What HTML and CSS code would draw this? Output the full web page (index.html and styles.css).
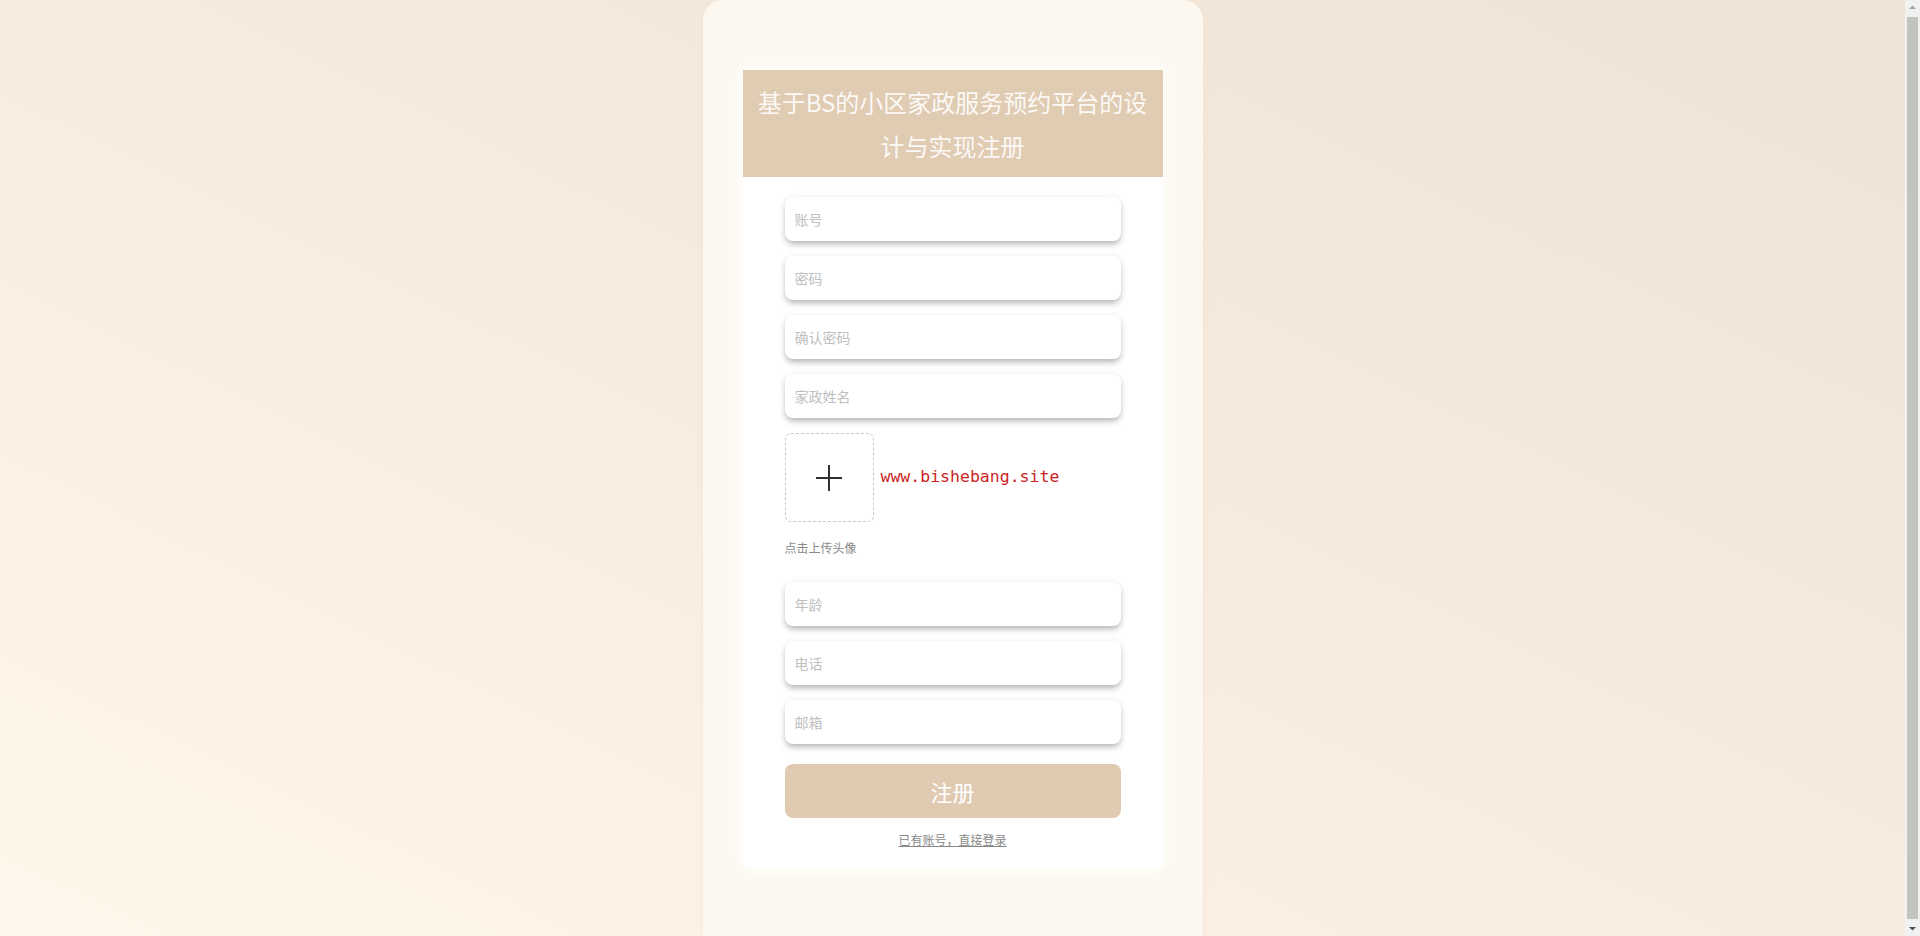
FILE: index.html
```html
<!DOCTYPE html>
<html lang="zh-CN">
<head>
<meta charset="utf-8">
<title>注册</title>
<link rel="stylesheet" href="styles.css">
</head>
<body>
<main class="viewport">
  <div class="shell">
    <div class="card">
      <div class="card-title">基于BS的小区家政服务预约平台的设计与实现注册</div>
      <form class="form">
        <input class="field" type="text" placeholder="账号">
        <input class="field" type="password" placeholder="密码">
        <input class="field" type="password" placeholder="确认密码">
        <input class="field" type="text" placeholder="家政姓名">
        <div class="upload-row">
          <div class="uploader">
            <svg width="26" height="26" viewBox="0 0 26 26" aria-hidden="true">
              <line x1="0" y1="13" x2="26" y2="13" stroke="#2f3133" stroke-width="2"/>
              <line x1="13" y1="0" x2="13" y2="26" stroke="#2f3133" stroke-width="2"/>
            </svg>
          </div>
          <span class="watermark">www.bishebang.site</span>
        </div>
        <div class="upload-tip">点击上传头像</div>
        <input class="field" type="text" placeholder="年龄">
        <input class="field" type="text" placeholder="电话">
        <input class="field" type="text" placeholder="邮箱">
        <button class="submit" type="button">注册</button>
        <a class="login-link" href="#">已有账号，直接登录</a>
      </form>
    </div>
  </div>
</main>
<aside class="scrollbar" aria-hidden="true">
  <svg class="sb-arrow" width="15" height="15" viewBox="0 0 15 15"><path d="M4 9 L7.5 5.5 L11 9 Z" fill="#a3a3a3"/></svg>
  <div class="sb-thumb"></div>
  <svg class="sb-arrow" width="15" height="15" viewBox="0 0 15 15"><path d="M4 6 L7.5 9.5 L11 6 Z" fill="#505050"/></svg>
</aside>
</body>
</html>
```
FILE: styles.css
```css
html, body {
  margin: 0;
  padding: 0;
}
body {
  font-family: "Noto Sans CJK SC", "Noto Sans", sans-serif;
  background: linear-gradient(to bottom left, #eee3d4 0%, #f5eadd 40%, #fbf0e4 70%, #fff7eb 100%);
  display: flex;
  align-items: flex-start;
  height: 936px;
  overflow: hidden;
}
.viewport {
  flex: 1;
  min-width: 0;
}
.scrollbar {
  width: 15px;
  height: 936px;
  flex: none;
  background: #f1f1f1;
  display: flex;
  flex-direction: column;
  align-items: center;
}
.sb-arrow {
  display: block;
  flex: none;
}
.sb-thumb {
  flex: 1;
  width: 11px;
  margin: 2px 0;
  background: #c3c3bf;
}
.shell {
  width: 500px;
  height: 943px;
  margin: 0 auto;
  box-sizing: border-box;
  padding-top: 70px;
  background: #fdf8ef;
  border-radius: 20px 20px 0 0;
  box-shadow: 0 0 6px rgba(240, 225, 205, 0.6);
}
.card {
  width: 420px;
  margin: 0 auto;
  background: #fff;
  border-radius: 0 0 6px 6px;
  box-shadow: 0 0 14px 4px rgba(255, 255, 255, 0.9);
  padding-bottom: 20px;
}
.card-title {
  background: #e0cbb3;
  color: rgba(255, 255, 255, 0.9);
  font-size: 24px;
  line-height: 44px;
  padding: 10px 8px 9px;
  text-align: center;
}
.form {
  width: 336px;
  margin: 0 auto;
  padding-top: 20px;
  display: flex;
  flex-direction: column;
}
.field {
  display: block;
  height: 44px;
  width: 100%;
  box-sizing: border-box;
  border: none;
  outline: none;
  border-radius: 8px;
  background: #fff;
  padding: 0 10px;
  margin-bottom: 15px;
  font-family: "Noto Sans CJK SC", sans-serif;
  font-size: 14px;
  color: #606266;
  box-shadow: 0 4px 6px -1px rgba(0, 0, 0, 0.28), 0 0 8px rgba(0, 0, 0, 0.05);
}
.field::placeholder {
  color: #c0c0c0;
}
.upload-row {
  display: flex;
  align-items: center;
  gap: 7px;
}
.uploader {
  width: 89px;
  height: 89px;
  box-sizing: border-box;
  border: 1px dashed #c8c8c8;
  border-radius: 6px;
  display: flex;
  align-items: center;
  justify-content: center;
}
.watermark {
  font-family: "DejaVu Sans Mono", monospace;
  font-size: 16.5px;
  color: #cc1f24;
  margin-top: -2px;
}
.upload-tip {
  font-size: 12px;
  line-height: 20px;
  color: #8a8a8a;
  margin-top: 16px;
  margin-bottom: 24px;
}
.submit {
  height: 54px;
  margin-top: 5px;
  border: none;
  border-radius: 8px;
  background: #e0cab2;
  color: #fff;
  font-family: "Noto Sans CJK SC", sans-serif;
  font-size: 22px;
}
.login-link {
  align-self: center;
  margin-top: 14px;
  font-size: 12px;
  line-height: 16px;
  color: #888;
  text-decoration: underline;
}
```
